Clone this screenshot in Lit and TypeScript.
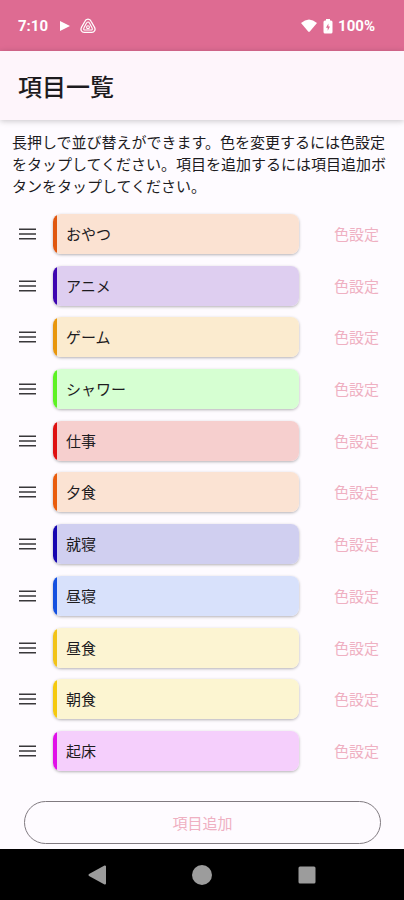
import { LitElement, html, css, svg } from "lit";
import { customElement, state } from "lit/decorators.js";

interface Item {
  name: string;
  bar: string;
  fill: string;
}

const ITEMS: Item[] = [
  { name: "おやつ", bar: "#e0570f", fill: "#fbe2d2" },
  { name: "アニメ", bar: "#3d05b0", fill: "#decef0" },
  { name: "ゲーム", bar: "#e8960c", fill: "#fbebcf" },
  { name: "シャワー", bar: "#5cf222", fill: "#d6ffd2" },
  { name: "仕事", bar: "#de1010", fill: "#f6cfce" },
  { name: "夕食", bar: "#e95c0c", fill: "#fbe3d3" },
  { name: "就寝", bar: "#1606b0", fill: "#d0cff0" },
  { name: "昼寝", bar: "#1450e0", fill: "#d8e1fb" },
  { name: "昼食", bar: "#f2c318", fill: "#fcf4d2" },
  { name: "朝食", bar: "#f5c90e", fill: "#fcf5d1" },
  { name: "起床", bar: "#e010e8", fill: "#f5cffc" },
];

const playIcon = svg`<path d="M1 1 L11 6 L1 11 Z" fill="#fff"/>`;

@customElement("app-root")
export class AppRoot extends LitElement {
  @state() private items = ITEMS;

  static styles = css`
    :host {
      display: flex;
      flex-direction: column;
      min-height: 100vh;
      background: #fefbff;
      color: #1d1b1e;
      font-family: "Noto Sans CJK JP", sans-serif;
      font-size: 15px;
      line-height: 22px;
    }
    button {
      font: inherit;
      margin: 0;
      padding: 0;
      border: 0;
      background: none;
      cursor: pointer;
    }
    svg {
      display: block;
      flex: none;
    }
    .status {
      display: flex;
      align-items: center;
      height: 51px;
      padding: 0 29px 0 18px;
      background: #de6b92;
      color: #fff;
      font-family: Roboto, sans-serif;
      font-size: 15px;
      font-weight: 700;
    }
    .play {
      margin-left: 11px;
    }
    .app-mark {
      margin-left: 9px;
    }
    .wifi {
      margin-left: auto;
    }
    .battery {
      margin: 0 5px 0 6px;
    }
    .bar {
      position: relative;
      padding: 19px 18px 18px;
      background: #fef5fb;
      box-shadow: 0 1px 6px rgba(0, 0, 0, 0.22);
    }
    h1 {
      margin: 0;
      font-size: 24px;
      line-height: 32px;
      font-weight: 500;
    }
    main {
      flex: 1;
      display: flex;
      flex-direction: column;
      padding: 11px 0 5px;
    }
    .intro {
      margin: 0 12px 17px;
    }
    .list {
      flex: 1;
      display: flex;
      flex-direction: column;
      justify-content: space-between;
      gap: 4px;
      list-style: none;
      margin: 0;
      padding: 0;
    }
    .row {
      display: grid;
      grid-template-columns: 53px 1fr 105px;
      align-items: center;
    }
    .handle {
      display: grid;
      place-items: center;
      height: 40px;
      padding-left: 2px;
    }
    .card {
      padding: 9px 13px;
      border-radius: 8px;
      box-shadow: 0 1px 3px rgba(0, 0, 0, 0.3);
      background: linear-gradient(to right, var(--bar) 4px, var(--fill) 4px);
    }
    .color {
      justify-self: center;
      padding: 9px 0;
      margin-left: 10px;
      color: #efb0c2;
    }
    .add {
      margin: 30px 23px 0 24px;
      height: 43px;
      border: 1px solid #807a80;
      border-radius: 22px;
      color: #efb0c2;
    }
    .nav {
      display: flex;
      justify-content: center;
      align-items: center;
      gap: 85px;
      height: 51px;
      background: #000;
    }
  `;

  render() {
    return html`
      <div class="status">
        <span>7:10</span>
        <svg class="play" width="12" height="12" viewBox="0 0 12 12">${playIcon}</svg>
        <svg class="app-mark" width="16" height="16" viewBox="0 0 16 16" fill="none" stroke="#fff" stroke-linejoin="round">
          <path stroke-width="1.3" d="M8 1.2 C6.5 1.2 5.4 2 4.8 3.5 L1.5 9.3 C0.2 11.7 1.5 14.4 4.2 14.4 H11.8 C14.5 14.4 15.8 11.7 14.5 9.3 L11.2 3.5 C10.6 2 9.5 1.2 8 1.2 Z"/>
          <path stroke-width="1.1" d="M8 4 Q7 4 6.4 5.2 L4 9.8 Q3 12 5 12 H11 Q13 12 12 9.8 L9.6 5.2 Q9 4 8 4 Z"/>
          <circle cx="8" cy="9.2" r="1.4" stroke-width="1.1"/>
        </svg>
        <svg class="wifi" width="16" height="14" viewBox="0 0 16 14"><path fill="#fff" d="M0 4 Q8 -3 16 4 L8.8 12.6 Q8 13.5 7.2 12.6 Z"/></svg>
        <svg class="battery" width="10" height="16" viewBox="0 0 10 16">
          <path fill="#fff" d="M3 1 H7 V2.5 H8 Q9.5 2.5 9.5 4 V14 Q9.5 15.5 8 15.5 H2 Q0.5 15.5 0.5 14 V4 Q0.5 2.5 2 2.5 H3 Z"/>
          <path fill="#de6b92" d="M5.4 5.5 L3 9.8 H4.7 V12.8 L7 8.6 H5.4 Z"/>
        </svg>
        <span>100%</span>
      </div>
      <header class="bar"><h1>項目一覧</h1></header>
      <main>
        <p class="intro">長押しで並び替えができます。色を変更するには色設定をタップしてください。項目を追加するには項目追加ボタンをタップしてください。</p>
        <ul class="list">
          ${this.items.map(
            (item) => html`
              <li class="row">
                <button class="handle" aria-label="${item.name}を並び替え">
                  <svg width="17" height="12" viewBox="0 0 17 12" stroke="#39373a" stroke-width="1.5">
                    <path d="M0 1.2 H17 M0 6 H17 M0 10.8 H17"/>
                  </svg>
                </button>
                <div class="card" style="--bar:${item.bar};--fill:${item.fill}">${item.name}</div>
                <button class="color">色設定</button>
              </li>
            `
          )}
        </ul>
        <button class="add">項目追加</button>
      </main>
      <nav class="nav">
        <button aria-label="戻る">
          <svg width="20" height="22" viewBox="0 0 20 22"><path fill="#9c9c9c" stroke="#9c9c9c" stroke-width="2" stroke-linejoin="round" d="M2.5 11 L18 2.5 V19.5 Z"/></svg>
        </button>
        <button aria-label="ホーム">
          <svg width="20" height="20" viewBox="0 0 20 20"><circle cx="10" cy="10" r="10" fill="#9c9c9c"/></svg>
        </button>
        <button aria-label="履歴">
          <svg width="20" height="20" viewBox="0 0 20 20"><rect x="1.5" y="1.5" width="17" height="17" rx="1.5" fill="#9c9c9c"/></svg>
        </button>
      </nav>
    `;
  }
}
